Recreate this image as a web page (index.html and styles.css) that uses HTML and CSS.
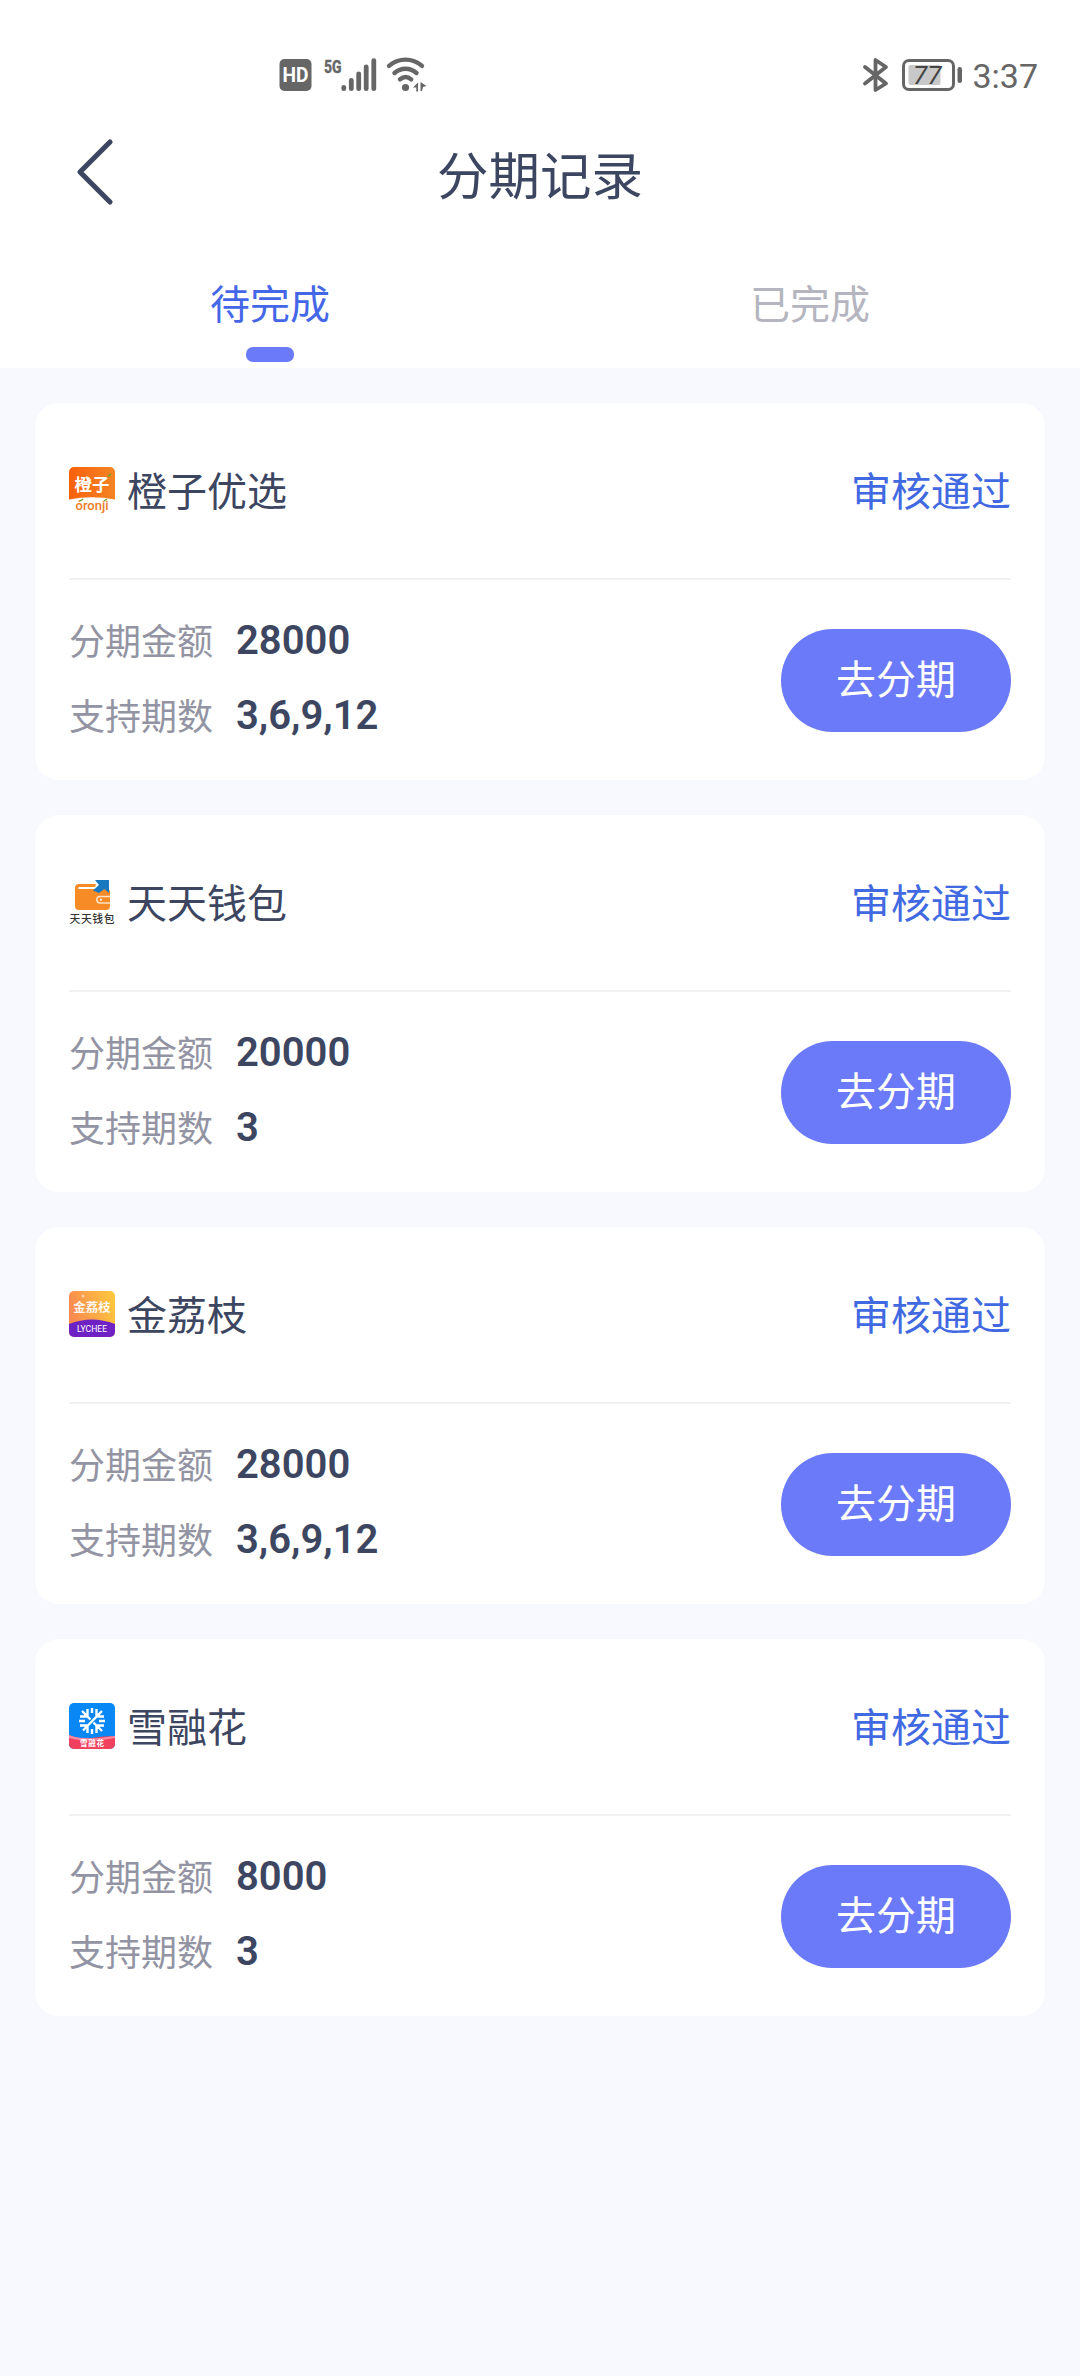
FILE: index.html
```html
<!DOCTYPE html>
<html lang="zh-CN">
<head>
<meta charset="utf-8">
<title>分期记录</title>
<link rel="stylesheet" href="styles.css">
</head>
<body>
<header class="header">
  <div class="status-bar">
    <svg class="status-left" width="150" height="46" viewBox="0 -10 150 46">
      <rect x="0.500" y="2" width="32" height="32" rx="5" fill="#666"/>
      <text x="16.500" y="25" text-anchor="middle" textLength="26" lengthAdjust="spacingAndGlyphs" font-size="20" font-weight="700" fill="#fff">HD</text>
      <text x="45" y="15.500" textLength="17.500" lengthAdjust="spacingAndGlyphs" font-size="19" font-weight="700" fill="#666" stroke="#666" stroke-width=".5">5G</text>
      <g stroke="#666" stroke-width="4.800" stroke-linecap="round">
        <path d="M64.800 30.300v1.400M72.300 23.400v8.300M79.700 16.800v14.900M87.200 10v21.700M94.800 3.600v28.100"/>
      </g>
      <g fill="none" stroke="#666" stroke-width="4.400" stroke-linecap="round">
        <path d="M110 8.800c9.500-8.200 23.500-8.200 33 0M115.500 16c6.500-5.600 15.500-5.600 22 0M121 22.300c3.600-3 7.700-3 11.200 0"/>
      </g>
      <circle cx="126.500" cy="30.500" r="3.600" fill="#666"/>
      <path d="M134 30.500l5-5v9h-1.700v-4zM141.500 25l6 4-3.500 1-1 4h-1.500z" fill="#666"/>
    </svg>
    <div class="status-right">
      <svg width="100" height="36" viewBox="0 0 100 36">
        <path d="M3 10L24 26.500L13.500 33V3L24 10L3 26.500" fill="none" stroke="#666" stroke-width="3.800" stroke-linecap="round" stroke-linejoin="round"/>
        <rect x="41.500" y="3.500" width="50" height="29" rx="5.500" fill="none" stroke="#666" stroke-width="3"/>
        <rect x="46.500" y="8" width="32" height="20" rx="2" fill="#c8c8c8"/>
        <rect x="95.500" y="10" width="4.500" height="16" rx="2.200" fill="#666"/>
        <text x="51" y="27" font-size="26" font-style="italic" font-weight="400" fill="#444">77</text>
      </svg>
      <span class="clock">3:37</span>
    </div>
  </div>
  <div class="nav">
    <svg class="back" width="40" height="68" viewBox="0 0 40 68"><path d="M35 4L5 34L35 64" fill="none" stroke="#3d4661" stroke-width="5.200" stroke-linecap="round" stroke-linejoin="round"/></svg>
    <h1 class="title">分期记录</h1>
  </div>
  <nav class="tabs">
    <div class="tab active">待完成</div>
    <div class="tab">已完成</div>
  </nav>
</header>
<main class="list">
  <section class="card">
    <div class="card-head">
      <svg class="logo" viewBox="0 0 46 46">
        <defs><linearGradient id="orange" x1="0" y1="0" x2="1" y2="0"><stop offset="0" stop-color="#f9600c"/><stop offset="1" stop-color="#f48424"/></linearGradient></defs>
        <path d="M0 5a5 5 0 0 1 5-5h36a5 5 0 0 1 5 5v27.500q-23-4.500-46 0z" fill="url(#orange)"/>
        <text class="cjk" x="23" y="24" text-anchor="middle" font-size="17.500" font-weight="700" fill="#fff">橙子</text>
        <path d="M38 9l4-3-1 4z" fill="#6fa52b"/>
        <text x="23" y="42.500" text-anchor="middle" textLength="33" lengthAdjust="spacingAndGlyphs" font-size="13" font-weight="500" fill="#ee7a2a">óronji</text>
        <path d="M11 34l3-2M35 34l3-2" stroke="#6fa52b" stroke-width="1.500"/>
      </svg>
      <span class="name">橙子优选</span><span class="state">审核通过</span>
    </div>
    <div class="card-body">
      <dl class="facts"><dt>分期金额</dt><dd>28000</dd><dt>支持期数</dt><dd>3,6,9,12</dd></dl>
      <button class="go">去分期</button>
    </div>
  </section>
  <section class="card">
    <div class="card-head">
      <svg class="logo" viewBox="0 0 46 46">
        <path d="M6 9q0-4 4-4h17l-1 3H10q-1.500 1-.5 2h28.500q3 0 3 3v14q0 4-4 4H10q-4 0-4-4z" fill="#f78b26"/>
        <path d="M41 17.500H31a3.200 3.200 0 0 0 0 6.400h10" fill="#f78b26" stroke="#fde3c8" stroke-width="1.500"/><circle cx="32" cy="20.700" r="1.200" fill="#fde3c8"/>
        <path d="M26 1h14v13l-4.500-4-5.500 4-6-2.500 6-5.500z" fill="#1879c0"/>
        <text class="cjk" x="23" y="44" text-anchor="middle" textLength="45" font-size="10.800" font-weight="500" fill="#333">天天钱包</text>
      </svg>
      <span class="name">天天钱包</span><span class="state">审核通过</span>
    </div>
    <div class="card-body">
      <dl class="facts"><dt>分期金额</dt><dd>20000</dd><dt>支持期数</dt><dd>3</dd></dl>
      <button class="go">去分期</button>
    </div>
  </section>
  <section class="card">
    <div class="card-head">
      <svg class="logo" viewBox="0 0 46 46">
        <defs><linearGradient id="gold" x1="0" y1="0.300" x2="1" y2="0"><stop offset="0" stop-color="#fb8b50"/><stop offset="1" stop-color="#fdcb3c"/></linearGradient>
        <clipPath id="tile"><rect width="46" height="46" rx="5"/></clipPath></defs>
        <g clip-path="url(#tile)"><rect width="46" height="46" fill="url(#gold)"/>
        <path d="M0 33q23-9 46 0v13H0z" fill="#6f22c4"/></g>
        <circle cx="14" cy="5" r="1.500" fill="#fff" opacity=".5"/>
        <text class="cjk" x="23" y="21" text-anchor="middle" font-size="12.500" font-weight="700" fill="#fff" opacity=".9">金荔枝</text>
        <text x="23" y="41" text-anchor="middle" textLength="30" lengthAdjust="spacingAndGlyphs" font-size="9" font-weight="400" fill="#fff">LYCHEE</text>
      </svg>
      <span class="name">金荔枝</span><span class="state">审核通过</span>
    </div>
    <div class="card-body">
      <dl class="facts"><dt>分期金额</dt><dd>28000</dd><dt>支持期数</dt><dd>3,6,9,12</dd></dl>
      <button class="go">去分期</button>
    </div>
  </section>
  <section class="card">
    <div class="card-head">
      <svg class="logo" viewBox="0 0 46 46">
        <g clip-path="url(#tile)"><rect width="46" height="46" fill="#0887f5"/>
        <path d="M0 32q12 5 23 3t23-2v13H0z" fill="#f2405f"/><path d="M0 32q14 6 46 1v2q-28 5-46 0z" fill="#f88ba0"/></g>
        <path d="M13 8l8.500 8.500M33 8L14 27.500M33 28l-8.500-8.500M18.500 6v7.500H11M27.500 6v7.500H35M18.500 30v-7.500H11M27.500 30v-7.500H35M23 5v5M23 26v5M10 18h6M30 18h6" stroke="#fff" stroke-width="2.400" fill="none"/>
        <text class="cjk" x="23" y="43" text-anchor="middle" textLength="24" font-size="7.500" font-weight="700" fill="#fff">雪融花</text>
      </svg>
      <span class="name">雪融花</span><span class="state">审核通过</span>
    </div>
    <div class="card-body">
      <dl class="facts"><dt>分期金额</dt><dd>8000</dd><dt>支持期数</dt><dd>3</dd></dl>
      <button class="go">去分期</button>
    </div>
  </section>
</main>
</body>
</html>
```
FILE: styles.css
```css
* { box-sizing: border-box; margin: 0; padding: 0; }
body {
  width: 1080px;
  min-height: 2376px;
  background: #f8f9ff;
  color: #3d4661;
  font-family: "Noto Sans CJK SC", sans-serif;
  font-size: 40px;
}
svg { display: block; flex: none; }
svg text { font-family: Roboto, sans-serif; }
svg text.cjk { font-family: "Noto Sans CJK SC", sans-serif; }

.header { height: 368px; background: #fff; }
.status-bar {
  display: flex;
  align-items: flex-end;
  justify-content: space-between;
  height: 114px;
  padding: 0 42px 21px 279px;
}
.status-right { display: flex; gap: 10px; }
.clock {
  font: 400 34px/38px Roboto, sans-serif;
  height: 36px;
  color: #666;
}
.nav {
  display: grid;
  grid-template-columns: 120px 1fr 120px;
  align-items: center;
  height: 120px;
}
.back { margin: -4px 0 0 75px; }
.title {
  padding-bottom: 2px;
  font-size: 51.5px;
  font-weight: 400;
  line-height: 60px;
  text-align: center;
}
.tabs { display: flex; height: 134px; }
.tab {
  flex: 1;
  display: flex;
  flex-direction: column;
  align-items: center;
  padding-top: 40px;
  line-height: 56px;
  color: #b4b5bf;
}
.tab.active { color: #4467e8; }
.tab.active::after {
  content: "";
  width: 48px;
  height: 15px;
  margin-top: 17px;
  border-radius: 7px;
  background: #6a7af8;
}

.list {
  display: flex;
  flex-direction: column;
  gap: 35px;
  padding: 35px;
}
.card {
  height: 377px;
  padding: 0 34px;
  border-radius: 24px;
  background: #fff;
}
.card-head {
  display: flex;
  align-items: center;
  height: 177px;
  padding-bottom: 1px;
  border-bottom: 2px solid #f1f1f4;
}
.logo { width: 46px; height: 46px; }
.name { margin-left: 12px; padding-bottom: 2px; line-height: 56px; }
.state { margin-left: auto; padding-bottom: 2px; line-height: 56px; color: #4169e1; }
.card-body {
  display: flex;
  justify-content: space-between;
  padding-top: 24px;
}
.facts {
  display: grid;
  grid-template-columns: 167px auto;
  grid-auto-rows: 75px;
}
.facts dt {
  font-size: 36px;
  line-height: 70px;
  color: #9394a3;
}
.facts dd { font: 600 40px/74px Roboto, sans-serif; }
.go {
  width: 230px;
  height: 103px;
  margin-top: 25px;
  padding-bottom: 8px;
  border: 0;
  border-radius: 52px;
  background: #6a7af8;
  color: #fff;
  font: inherit;
}
```
